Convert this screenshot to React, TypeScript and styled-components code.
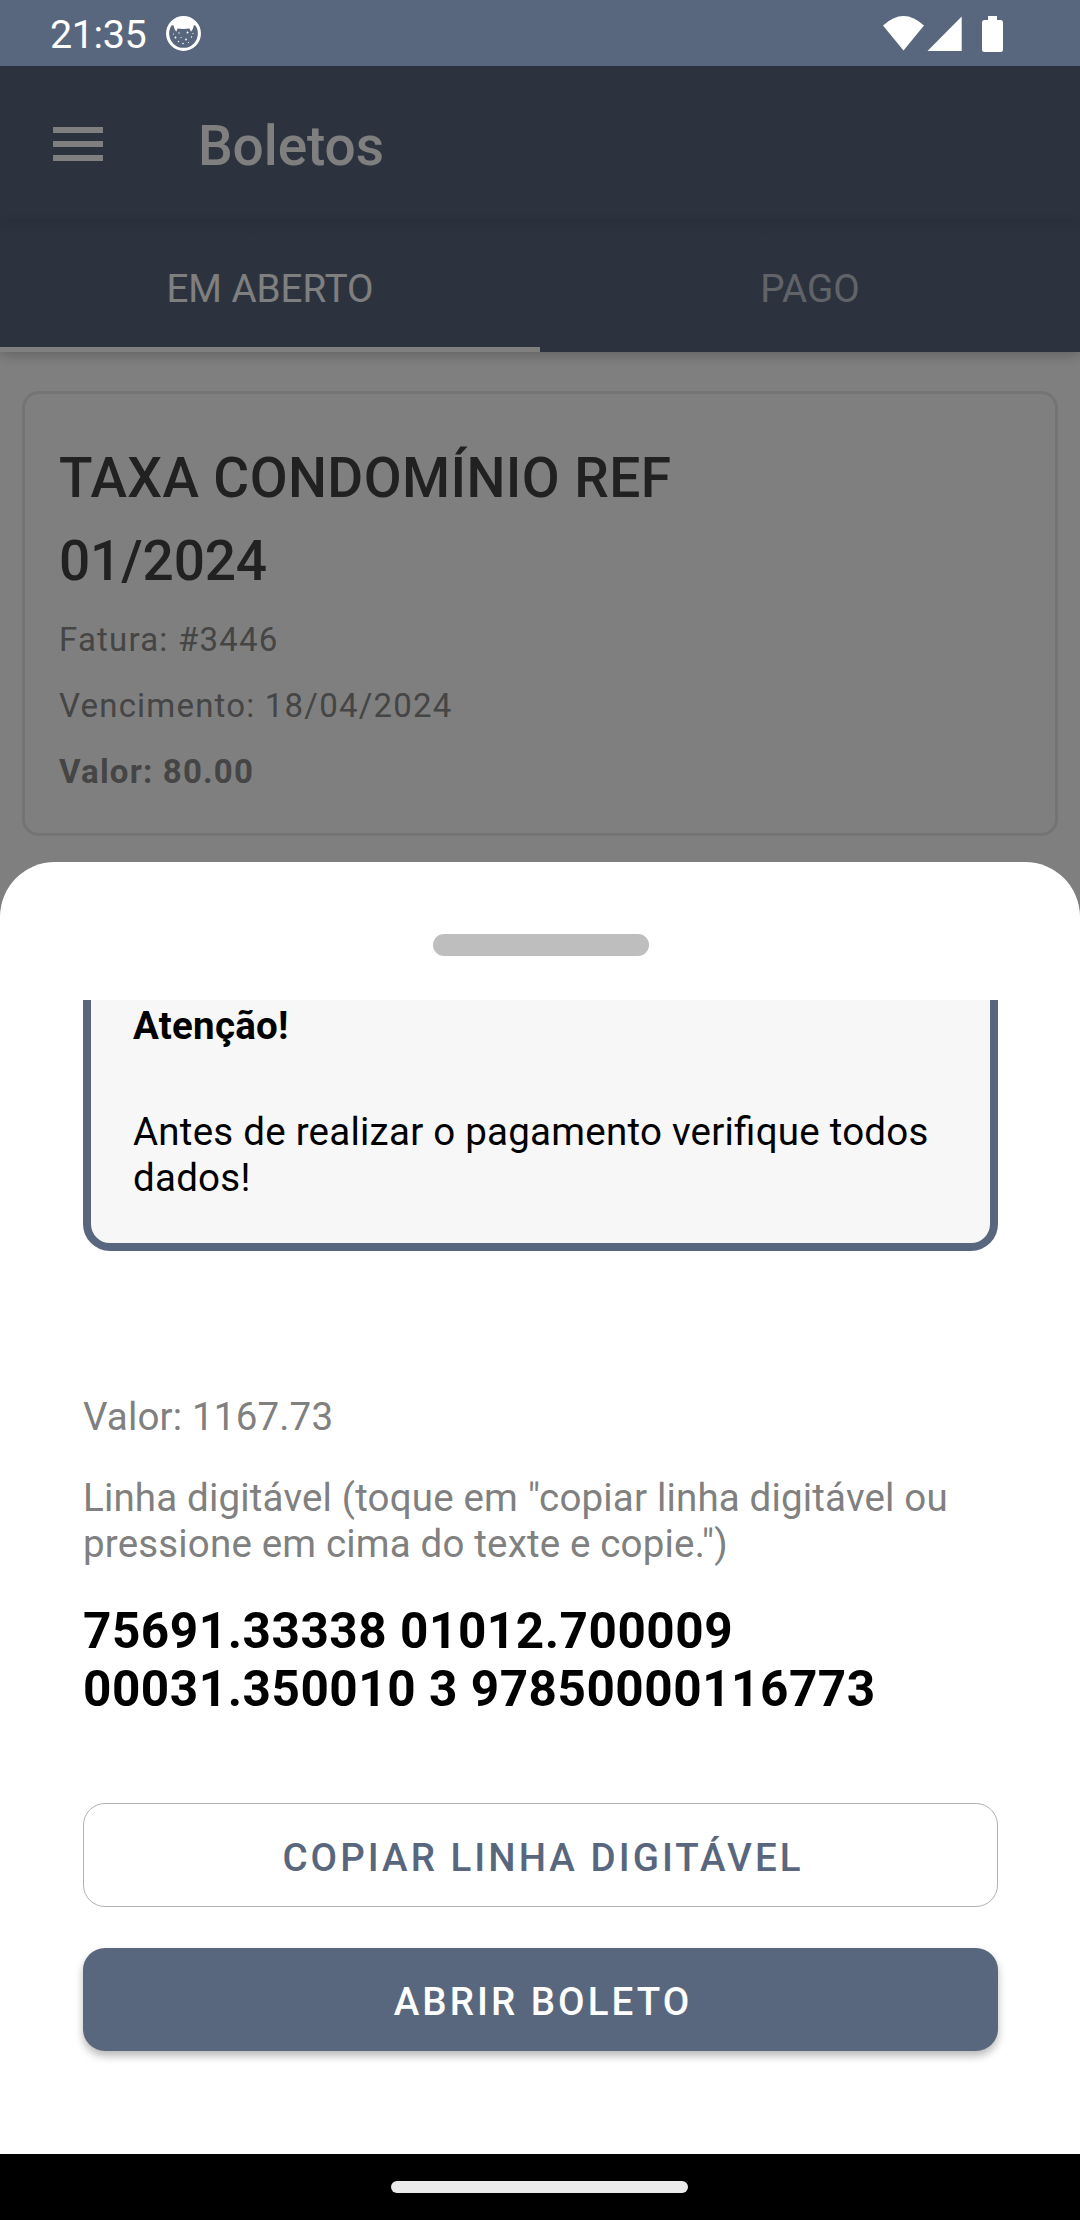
import React from "react";
import styled, { createGlobalStyle } from "styled-components";

const GlobalStyle = createGlobalStyle`
  * { box-sizing: border-box; }
  body { margin: 0; background: #000; }
  button { font: inherit; border: 0; padding: 0; background: none; }
`;

const brand = "#59677e";

const Phone = styled.div`
  width: 1080px;
  height: 2220px;
  display: flex;
  flex-direction: column;
  overflow: hidden;
  font-family: Roboto, "Noto Sans", sans-serif;
  font-size: 38.5px;
  color: #000;
`;

const StatusBar = styled.header`
  height: 66px;
  flex: none;
  display: flex;
  align-items: center;
  padding: 1px 77px 0 50px;
  background: ${brand};
  color: #fff;
`;

const Clock = styled.span`
  width: 116px;
  margin-top: 2px;
  font-size: 39.5px;
  line-height: 66px;
  letter-spacing: -0.4px;
`;

const StatusIcons = styled.div`
  display: flex;
  margin-left: auto;
  height: 36px;
`;

const Screen = styled.div`
  position: relative;
  flex: 1;
  display: flex;
  flex-direction: column;
  overflow: hidden;
  background: #fff;
`;

const AppBar = styled.div`
  height: 154px;
  flex: none;
  display: flex;
  align-items: center;
  padding-left: 53px;
  background: ${brand};
  color: #fff;
`;

const MenuButton = styled.button`
  width: 50px;
  height: 34px;
  margin: 2px 95px 0 0;
  display: flex;
  flex-direction: column;
  justify-content: space-between;
`;

const MenuLine = styled.span`
  display: block;
  width: 50px;
  height: 6px;
  background: #fff;
`;

const Title = styled.h1`
  margin: 5px 0 0;
  font-size: 55px;
  font-weight: 500;
  line-height: 64px;
  letter-spacing: -0.1px;
`;

const Tabs = styled.nav`
  height: 132px;
  flex: none;
  display: flex;
  background: linear-gradient(#546177, ${brand} 20px);
  box-shadow: 0 4px 12px rgba(0, 0, 0, 0.22);
`;

const Tab = styled.div<{ $active?: boolean }>`
  flex: 1;
  display: flex;
  align-items: center;
  justify-content: center;
  padding-top: ${(p) => (p.$active ? 10 : 5)}px;
  border-bottom: ${(p) => (p.$active ? "5px solid #fff" : "0")};
  color: ${(p) => (p.$active ? "#fff" : "rgba(255,255,255,.65)")};
`;

const Card = styled.article`
  margin: 39px 22px 0;
  height: 445px;
  padding: 43px 34px;
  border: 3px solid #e8e8e8;
  border-radius: 17px;
`;

const CardTitle = styled.h2`
  margin: 0 0 4px;
  width: 700px;
  font-size: 55px;
  font-weight: 500;
  line-height: 83px;
  letter-spacing: 0.4px;
  color: #424242;
`;

const Period = styled.span`
  letter-spacing: -0.15px;
`;

const CardLine = styled.p<{ $bold?: boolean }>`
  margin: 0;
  font-size: 33px;
  line-height: 66px;
  letter-spacing: 1.2px;
  font-weight: ${(p) => (p.$bold ? 700 : 400)};
  color: #8a8a8a;
`;

const Scrim = styled.div`
  position: absolute;
  inset: 0;
  display: flex;
  flex-direction: column;
  justify-content: flex-end;
  background: rgba(0, 0, 0, 0.5);
`;

const Sheet = styled.section`
  height: 1292px;
  display: flex;
  flex-direction: column;
  padding: 72px 62px 0 63px;
  background: #fff;
  border-radius: 55px 55px 0 0;
`;

const Handle = styled.div`
  width: 216px;
  height: 22px;
  flex: none;
  align-self: center;
  border-radius: 11px;
  background: #bebebe;
`;

const SheetScroll = styled.div`
  flex: 1;
  margin-top: 44px;
  padding: 0 20px 20px;
  overflow: hidden;
  display: flex;
  flex-direction: column;
`;

const Notice = styled.div`
  margin-top: -46px;
  padding: 41px 42px 42px;
  border: 8px solid ${brand};
  border-radius: 27px;
  background: #f7f7f7;
  line-height: 46px;
  letter-spacing: 0.24px;
  font-feature-settings: "liga" 1;
`;

const NoticeText = styled.p<{ $heading?: boolean }>`
  margin: 0 0 ${(p) => (p.$heading ? 60 : 0)}px;
  font-weight: ${(p) => (p.$heading ? 700 : 400)};
`;

const Info = styled.p<{ $gap: number }>`
  margin: ${(p) => p.$gap}px 0 0;
  line-height: 46px;
  letter-spacing: 0.17px;
  color: #808080;
`;

const Digits = styled.p`
  margin: 35px 0 85px;
  font-size: 49.5px;
  font-weight: 700;
  line-height: 58px;
  letter-spacing: 0.53px;
`;

const Action = styled.button<{ $filled?: boolean }>`
  height: ${(p) => (p.$filled ? 103 : 104)}px;
  flex: none;
  margin-bottom: 41px;
  padding: 4px 0 0 5px;
  border-radius: 22px;
  font-weight: 500;
  letter-spacing: 3.04px;
  background: ${(p) => (p.$filled ? brand : "#fff")};
  color: ${(p) => (p.$filled ? "#fff" : brand)};
  border: ${(p) => (p.$filled ? "0" : "1px solid #b2b2b2")};
  box-shadow: ${(p) => (p.$filled ? "0 5px 9px rgba(0,0,0,.28)" : "none")};
`;

const NavBar = styled.footer`
  height: 66px;
  flex: none;
  display: flex;
  align-items: center;
  justify-content: center;
  padding-right: 1px;
  background: #000;
`;

const NavPill = styled.div`
  width: 297px;
  height: 12px;
  border-radius: 6px;
  background: #ebebeb;
`;

const CatIcon = () => (
  <svg width="35" height="35" viewBox="0 0 35 35">
    <circle cx="17.5" cy="17.5" r="15.9" fill="none" stroke="#fff" strokeWidth="3.1" />
    <path
      fill="#fff"
      d="M5 9 Q17.500 -5 30 9 L27.800 9.500 L26.800 13 L25 15.800 L23.500 12.500 Q17.500 13.300 11.500 12.500 L10.300 15.800 L8.500 13 L7.500 9.500 Z"
    />
    <g fill="#fff">
      <circle cx="13" cy="17" r=".7" />
      <circle cx="21.500" cy="16.500" r="1" />
      <circle cx="9.500" cy="21.500" r=".9" />
      <circle cx="7.500" cy="18" r=".6" />
      <circle cx="15" cy="21.500" r=".6" />
      <circle cx="20" cy="23.500" r=".9" />
      <circle cx="25.500" cy="21" r=".7" />
      <circle cx="27" cy="17.500" r=".6" />
      <circle cx="12.500" cy="25.500" r=".7" />
      <circle cx="17" cy="27.500" r=".8" />
      <circle cx="22.500" cy="26.500" r=".6" />
    </g>
  </svg>
);

const SignalIcons = () => (
  <svg width="121" height="36" viewBox="0 0 121 36" fill="#fff">
    <path d="M1 9.500 Q21.500 -9.500 42 9.500 L21.500 34.500 Z" />
    <path d="M79.700 0.500 V35 H45.500 Z" />
    <path d="M106 0h9v4h3.500a2.500 2.500 0 0 1 2.500 2.500v27a2.500 2.500 0 0 1-2.500 2.500h-16a2.500 2.500 0 0 1-2.500-2.500v-27a2.500 2.500 0 0 1 2.500-2.500h3.500z" />
  </svg>
);

export default function App() {
  return (
    <Phone>
      <GlobalStyle />
      <StatusBar>
        <Clock>21:35</Clock>
        <CatIcon />
        <StatusIcons>
          <SignalIcons />
        </StatusIcons>
      </StatusBar>
      <Screen>
        <AppBar>
          <MenuButton aria-label="Menu">
            <MenuLine />
            <MenuLine />
            <MenuLine />
          </MenuButton>
          <Title>Boletos</Title>
        </AppBar>
        <Tabs>
          <Tab $active>EM ABERTO</Tab>
          <Tab>PAGO</Tab>
        </Tabs>
        <Card>
          <CardTitle>
            TAXA CONDOMÍNIO REF <Period>01/2024</Period>
          </CardTitle>
          <CardLine>Fatura: #3446</CardLine>
          <CardLine>Vencimento: 18/04/2024</CardLine>
          <CardLine $bold>Valor: 80.00</CardLine>
        </Card>
        <Scrim>
          <Sheet>
            <Handle />
            <SheetScroll>
              <Notice>
                <NoticeText $heading>Atenção!</NoticeText>
                <NoticeText>Antes de realizar o pagamento verifique todos dados!</NoticeText>
              </Notice>
              <Info $gap={143}>Valor: 1167.73</Info>
              <Info $gap={35}>
                Linha digitável (toque em "copiar linha digitável ou pressione em cima do texte e
                copie.")
              </Info>
              <Digits>75691.33338 01012.700009 00031.350010 3 97850000116773</Digits>
              <Action>COPIAR LINHA DIGITÁVEL</Action>
              <Action $filled>ABRIR BOLETO</Action>
            </SheetScroll>
          </Sheet>
        </Scrim>
      </Screen>
      <NavBar>
        <NavPill />
      </NavBar>
    </Phone>
  );
}
